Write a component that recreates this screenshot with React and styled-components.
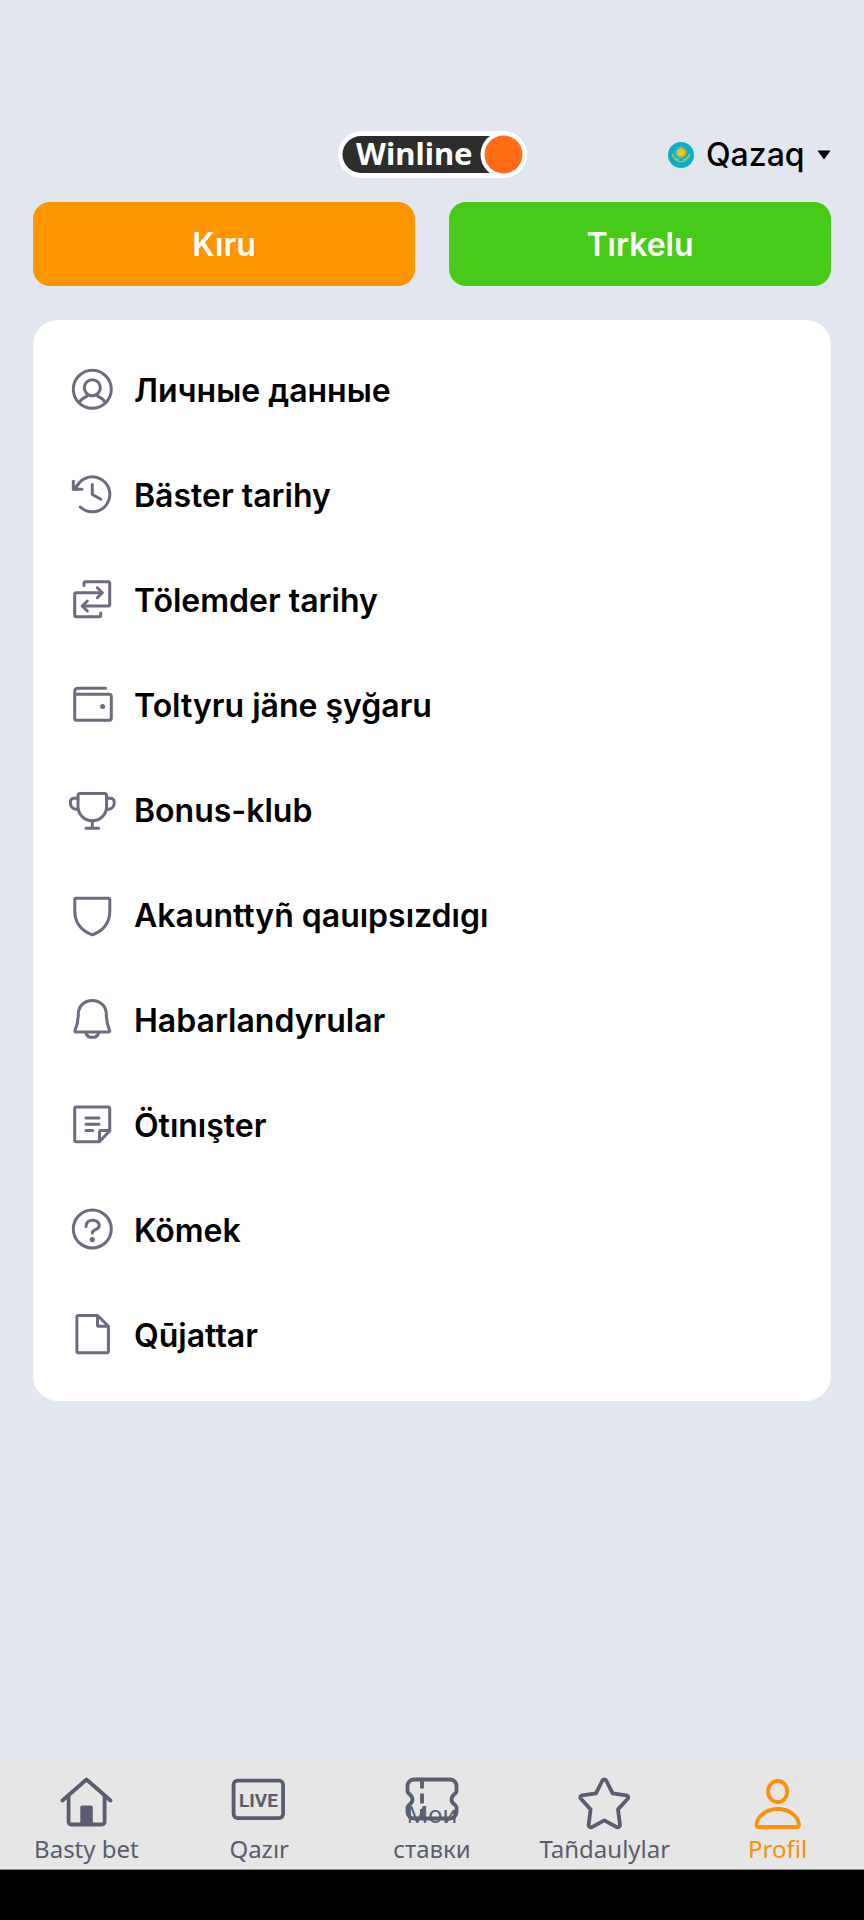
import React from 'react';
import styled, { createGlobalStyle, ThemeProvider } from 'styled-components';

const theme = {
    background: '#e1e6ef',
    card: '#ffffff',
    login: '#ff9500',
    register: '#46cc18',
    active: '#ff8e09',
    menuIcon: '#6b6c7e',
    tab: '#595d70',
    tabBar: '#e6e6e6',
    font: "Inter, 'Noto Sans', sans-serif",
    tabFont: "'Noto Sans', 'Open Sans', sans-serif"
};

const GlobalStyle = createGlobalStyle`
    *, *::before, *::after {
        box-sizing: border-box;
    }

    body {
        margin: 0;
        background-color: ${theme.background};
        font-family: ${theme.font};
    }
`;

const StyledWrapper = styled.div`
    min-height: 100vh;
    display: flex;
    flex-direction: column;
    background-color: ${({ theme }) => theme.background};
`;

const StyledHeader = styled.header`
    display: grid;
    grid-template-columns: 1fr auto 1fr;
    align-items: center;
    padding: 131px 33px 24px;
`;

const StyledLogo = styled.svg`
    grid-column: 2;
    display: block;
    width: 189px;
    height: 47px;
`;

const LanguagePicker = styled.label`
    display: flex;
    justify-content: flex-end;
    align-items: center;
    gap: 12px;
`;

const LanguageSelect = styled.select`
    appearance: none;
    border: 0;
    padding: 0;
    margin: 0;
    background: none;
    color: black;
    font-family: inherit;
    font-size: 32px;
    font-weight: 500;
    line-height: 40px;
`;

const StyledMain = styled.main`
    display: flex;
    flex-direction: column;
    gap: 34px;
    padding: 0 33px;
    margin-bottom: 34px;
`;

const AuthButtons = styled.div`
    display: grid;
    grid-template-columns: 1fr 1fr;
    gap: 34px;
`;

const Button = styled.button`
    height: 84px;
    border: 0;
    border-radius: 17px;
    background-color: ${({ theme, $color }) => theme[$color]};
    color: white;
    font-family: inherit;
    font-size: 32px;
    font-weight: 600;
`;

const MenuCard = styled.ul`
    list-style: none;
    margin: 0;
    padding: 18px 0 13px;
    border-radius: 25px;
    background-color: ${({ theme }) => theme.card};
`;

const MenuLink = styled.a`
    display: flex;
    align-items: center;
    gap: 18px;
    height: 105px;
    padding: 0 35px;
    color: black;
    font-size: 32px;
    font-weight: 600;
    text-decoration: none;
`;

const MenuIcon = styled.svg`
    flex: none;
    width: 48px;
    height: 48px;
    fill: none;
    stroke: ${({ theme }) => theme.menuIcon};
    stroke-width: 3;
    stroke-linecap: round;
    stroke-linejoin: round;

    .dot {
        fill: ${({ theme }) => theme.menuIcon};
        stroke: none;
    }
`;

const TabBar = styled.nav`
    display: grid;
    grid-template-columns: repeat(5, 1fr);
    height: 111px;
    margin-top: auto;
    border-bottom: 1px solid #8c8c8c;
    background-color: ${({ theme }) => theme.tabBar};
`;

/* icon and label share one cell, so a two-line label grows up over the icon */
const TabLink = styled.a`
    display: grid;
    grid-template-areas: 'tab';
    justify-items: center;
    padding: 12px 0 3px;
    color: ${({ theme, $active }) => ($active ? theme.active : theme.tab)};
    text-decoration: none;
`;

const TabIcon = styled.svg`
    grid-area: tab;
    align-self: start;
    width: 56px;
    height: 60px;
    fill: none;
    stroke: currentColor;
    stroke-width: 3.8;
    stroke-linecap: round;
    stroke-linejoin: round;

    text {
        fill: currentColor;
        stroke: none;
        font-family: Roboto, sans-serif;
        font-size: 19px;
        font-weight: 700;
    }
`;

const TabLabel = styled.span`
    grid-area: tab;
    align-self: end;
    font-family: ${({ theme }) => theme.tabFont};
    font-size: 24px;
    line-height: 35px;
    text-align: center;
`;

const SystemBar = styled.div`
    height: 50px;
    background-color: black;
`;

const menuItems = [
    {
        label: 'Личные данные',
        icon: (
            <>
                <circle cx="24.3" cy="22.3" r="19" />
                <circle cx="24.3" cy="20.7" r="8" />
                <path d="M11.3 35.6c1.7-3.2 4.2-4.8 6.6-5.7 1.3-.5 1.5-1.6 1-2.7M37.3 35.6c-1.7-3.2-4.2-4.8-6.6-5.7-1.3-.5-1.5-1.6-1-2.7" />
            </>
        )
    },
    {
        label: 'Bäster tarihy',
        icon: (
            <>
                <path d="M7.6 17.3A17.5 17.5 0 1 1 12.3 35" />
                <path d="M5.3 9.2v8.1H14M5.3 17.3l5-5M24.3 12.5v10l8.5 4.7" />
            </>
        )
    },
    {
        label: 'Tölemder tarihy',
        icon: (
            <>
                <path d="M16 8.5V6.2a1.5 1.5 0 0 1 1.5-1.5h22.7a1.5 1.5 0 0 1 1.5 1.5v21.3a1.5 1.5 0 0 1-1.5 1.5H15" />
                <path d="M19.3 24l-5 5 5 5M29.3 10.7l5 5-5 5" />
                <path d="M34 15.7H8.2a1.5 1.5 0 0 0-1.5 1.5v21a1.5 1.5 0 0 0 1.5 1.5h23a1.5 1.5 0 0 0 1.5-1.5V36" />
            </>
        )
    },
    {
        label: 'Toltyru jäne şyğaru',
        icon: (
            <>
                <path d="M37.5 6.2H9.7a3 3 0 0 0-3 3v27a2 2 0 0 0 2 2h32.6a2 2 0 0 0 2-2V14.3a2 2 0 0 0-2-2H6.7" />
                <circle className="dot" cx="34.6" cy="24.6" r="2.5" />
            </>
        )
    },
    {
        label: 'Bonus-klub',
        icon: (
            <>
                <path d="M12 6.5h24.6a2 2 0 0 1 2 2v11a14.3 14.3 0 0 1-28.6 0v-11a2 2 0 0 1 2-2z" />
                <path d="M10 11.2H5.9a3.5 3.5 0 0 0-3.5 3.5v1.5a6 6 0 0 0 6 6h1.8M38.6 11.2h4.1a3.5 3.5 0 0 1 3.5 3.5v1.5a6 6 0 0 1-6 6h-1.8" />
                <path d="M24.3 34v7.2M18 41.2h12.6" />
            </>
        )
    },
    {
        label: 'Akaunttyñ qauıpsızdıgı',
        icon: (
            <path d="M8.2 6.3h32.1a1.5 1.5 0 0 1 1.5 1.5V19c0 11.8-6.3 19.3-16.5 23.5a2.5 2.5 0 0 1-2 0C13.1 38.3 6.8 30.8 6.8 19V7.8a1.5 1.5 0 0 1 1.4-1.5z" />
        )
    },
    {
        label: 'Habarlandyrular',
        icon: (
            <>
                <path d="M24.3 3.4c-8 0-14 6-14 13.6 0 6.5-.8 10.5-3.3 16.3-.4 1 .1 1.7 1 1.7h32.6c.9 0 1.4-.7 1-1.7-2.5-5.8-3.3-9.8-3.3-16.3 0-7.6-6-13.6-14-13.6z" />
                <path d="M18 36.2a6.5 5.5 0 0 0 12.6 0" />
            </>
        )
    },
    {
        label: 'Ötınışter',
        icon: (
            <>
                <path d="M8.2 5h32a1.5 1.5 0 0 1 1.5 1.5V29L31.3 39.8H8.2a1.5 1.5 0 0 1-1.5-1.5V6.5A1.5 1.5 0 0 1 8.2 5z" />
                <path d="M31.5 39.5V30a1.5 1.5 0 0 1 1.5-1.5h8.5M18 16h13M18 22.2h13M18 28.4h6.8" />
            </>
        )
    },
    {
        label: 'Kömek',
        icon: (
            <>
                <circle cx="24.3" cy="22" r="19" />
                <path d="M18 19.6c0-8.7 13.2-8.2 13.2-.9 0 4.5-6.9 3.5-6.9 7.3" />
                <circle className="dot" cx="24.3" cy="32.6" r="2.6" />
            </>
        )
    },
    {
        label: 'Qūjattar',
        icon: (
            <>
                <path d="M10.4 3.5h19.2l10.8 10.8v25a1.5 1.5 0 0 1-1.5 1.5H10.4a1.5 1.5 0 0 1-1.5-1.5V5a1.5 1.5 0 0 1 1.5-1.5z" />
                <path d="M29.5 4v9.3a1 1 0 0 0 1 1H40" />
            </>
        )
    }
];

const tabs = [
    {
        label: 'Basty bet',
        icon: (
            <>
                <path d="M4.5 29.5L28.5 8.5l24 21" />
                <path d="M10.6 25v26a2.5 2.5 0 0 0 2.5 2.5h31a2.5 2.5 0 0 0 2.5-2.5V25" />
                <path
                    d="M24 34.5h9a1.8 1.8 0 0 1 1.8 1.8V53H22.3V36.3a1.8 1.8 0 0 1 1.7-1.8z"
                    fill="currentColor"
                    stroke="none"
                />
            </>
        )
    },
    {
        label: 'Qazır',
        icon: (
            <>
                <rect x="2.6" y="9.6" width="49.5" height="37.5" rx="4" />
                <text x="27.5" y="36" textAnchor="middle">
                    LIVE
                </text>
            </>
        )
    },
    {
        label: (
            <>
                Мои
                <br />
                ставки
            </>
        ),
        icon: (
            <>
                <path d="M10 8.5h36a6.5 6.5 0 0 1 6.5 6.5v5.5c0 2.5-5 3-5 8s5 5 5 8V41a6.5 6.5 0 0 1-6.5 6.5H10A6.5 6.5 0 0 1 3.5 41v-4.5c0-3 5-3 5-8s-5-5.5-5-8V15a6.5 6.5 0 0 1 6.5-6.5z" />
                <path d="M18 9v8.5M18 22.5v10M18 38v9" strokeLinecap="butt" />
            </>
        )
    },
    {
        label: 'Tañdaulylar',
        icon: (
            <path d="M25.4 9.5q1.9-2.3 3.8 0L35.6 22.4l13.9 1.9q2.7.9 1.2 3.5L41 38.4l2 15.5q-.4 3-3.3 2.2L27.3 49.3 14.9 56.1q-2.9.8-3.3-2.2l2-15.5L3.9 27.8q-1.5-2.6 1.2-3.5l13.9-1.9z" />
        )
    },
    {
        label: 'Profil',
        active: true,
        icon: (
            <>
                <ellipse cx="27.7" cy="20.5" rx="9.6" ry="10.7" />
                <path d="M8.3 56h38.8q1.8 0 1.8-1.8C48.9 46 39.5 38 27.7 38S6.5 46 6.5 54.2q0 1.8 1.8 1.8z" />
            </>
        )
    }
];

const Logo = () => (
    <StyledLogo viewBox="0 0 189 47" role="img" aria-label="Winline">
        <rect width="189" height="47" rx="23.5" fill="white" />
        <path d="M23 5h145v37H23a18.5 18.5 0 0 1 0-37z" fill="#2d2d2d" />
        <circle cx="165.5" cy="23.5" r="23" fill="white" />
        <circle cx="165.5" cy="23.5" r="19" fill="#ff6c13" />
        <text
            x="18"
            y="34"
            fill="white"
            fontFamily="'Noto Sans', sans-serif"
            fontSize="31"
            fontWeight="700">
            Winline
        </text>
    </StyledLogo>
);

const Flag = () => (
    <svg width="26" height="26" viewBox="0 0 26 26" aria-hidden="true">
        <circle cx="13" cy="13" r="13" fill="#08b0cb" />
        <circle cx="13" cy="10.5" r="4.3" fill="#fdc010" />
        <g fill="none" stroke="#c9bf3c" strokeLinecap="round">
            <circle cx="13" cy="10.5" r="5.4" strokeWidth="1" strokeDasharray=".6 1" />
            <path d="M4.5 12.5q1.5 4.5 6 5.5M21.5 12.5q-1.5 4.5-6 5.5" strokeWidth="1.4" />
            <path d="M7 17.5q2.5 3 6 2.2 3.5.8 6-2.2" strokeWidth="1" />
        </g>
    </svg>
);

const App = () => {
    return (
        <ThemeProvider theme={theme}>
            <GlobalStyle />
            <StyledWrapper>
                <StyledHeader>
                    <Logo />
                    <LanguagePicker>
                        <Flag />
                        <LanguageSelect aria-label="Tıl" defaultValue="kk">
                            <option value="kk">Qazaq</option>
                        </LanguageSelect>
                        <svg width="14" height="10" viewBox="0 0 14 10" aria-hidden="true">
                            <path d="M.5.5h13L7 9.500z" />
                        </svg>
                    </LanguagePicker>
                </StyledHeader>
                <StyledMain>
                    <AuthButtons>
                        <Button type="button" $color="login">
                            Kıru
                        </Button>
                        <Button type="button" $color="register">
                            Tırkelu
                        </Button>
                    </AuthButtons>
                    <MenuCard>
                        {menuItems.map(({ label, icon }) => (
                            <li key={label}>
                                <MenuLink href="#">
                                    <MenuIcon viewBox="0 0 48 48" aria-hidden="true">
                                        {icon}
                                    </MenuIcon>
                                    {label}
                                </MenuLink>
                            </li>
                        ))}
                    </MenuCard>
                </StyledMain>
                <TabBar>
                    {tabs.map(({ label, icon, active }, index) => (
                        <TabLink key={index} href="#" $active={active}>
                            <TabIcon viewBox="0 0 56 60" aria-hidden="true">
                                {icon}
                            </TabIcon>
                            <TabLabel>{label}</TabLabel>
                        </TabLink>
                    ))}
                </TabBar>
                <SystemBar />
            </StyledWrapper>
        </ThemeProvider>
    );
};

export default App;
